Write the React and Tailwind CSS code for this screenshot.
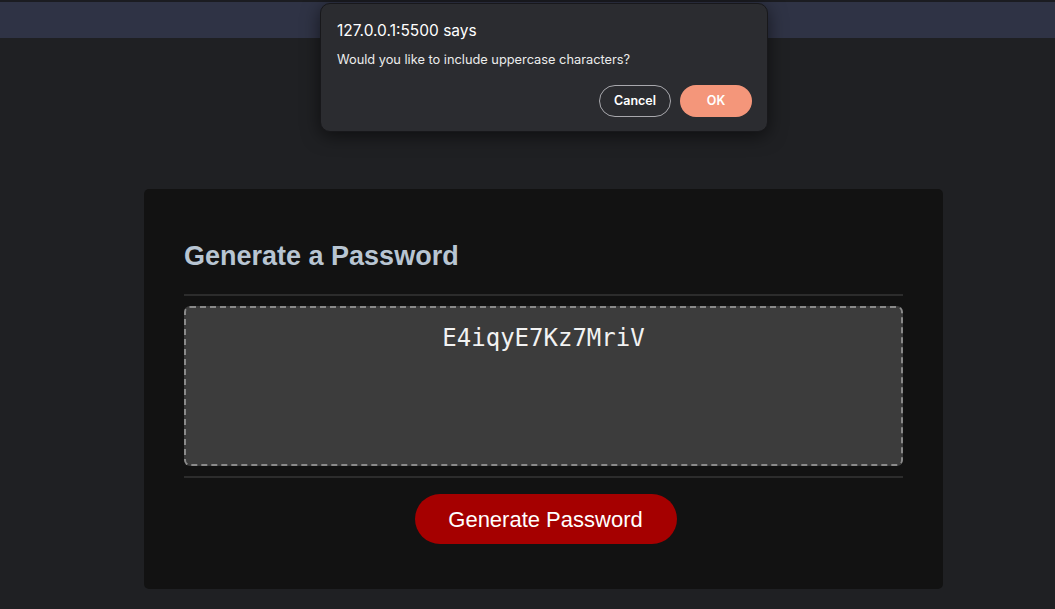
import React from 'react';

export default function App() {
  const password = 'E4iqyE7Kz7MriV';

  return (
    <div className="relative min-h-[609px] bg-[#1f2023] font-['Liberation_Sans',Arial,sans-serif]">
      {/* top bar behind the alert */}
      <div className="h-[38px] bg-[#2f3345] border-t-2 border-[#1b1c21]" />

      <main className="flex justify-center pt-[151px] pb-5 pl-[32px]">
        <div className="w-[799px] bg-[#121212] rounded-[5px] pt-[52px] px-10 pb-[45px]">
          <h2 className="text-[27px] leading-[30px] font-bold text-[#b8c5d2] mb-[23px]">
            Generate a Password
          </h2>
          <div className="h-[2px] bg-[#2c2c2c]" />
          <div className="mt-[10px] h-[160px] bg-[#3c3c3c] border-2 border-dashed border-[#8a8a8a] rounded-[6px] pt-[13px] text-center font-['DejaVu_Sans_Mono',monospace] text-[24px] leading-[34px] text-[#f2f2f2]">
            {password}
          </div>
          <div className="mt-[10px] h-[2px] bg-[#2c2c2c]" />
          <div className="flex justify-center mt-[16px] pl-[4px]">
            <button className="w-[262px] h-[50px] rounded-full bg-[#a50000] text-white text-[22px]">
              Generate Password
            </button>
          </div>
        </div>
      </main>

      {/* browser alert */}
      <div className="absolute left-[320px] top-[3px] w-[448px] h-[129px] rounded-[10px] bg-[#2b2c30] border border-[#18181b] shadow-[0_4px_18px_rgba(0,0,0,0.55)] px-4 pt-[17px] font-['Inter',sans-serif]">
        <div className="text-[15.5px] leading-[20px] text-white">127.0.0.1:5500 says</div>
        <div className="mt-[11px] text-[12.8px] leading-[16px] text-[#ececec]">
          Would you like to include uppercase characters?
        </div>
        <div className="flex justify-end gap-[9px] mt-[17px] -mr-[1px]">
          <button className="w-[72px] h-[32px] rounded-full border border-[#a8a8ad] text-[12.5px] font-semibold text-white">
            Cancel
          </button>
          <button className="w-[72px] h-[32px] rounded-full bg-[#f4967a] text-[12.5px] font-semibold text-white">
            OK
          </button>
        </div>
      </div>
    </div>
  );
}
